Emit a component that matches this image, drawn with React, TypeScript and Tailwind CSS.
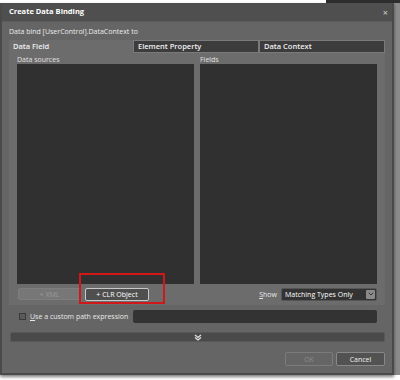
import { ChevronDown } from "lucide-react";

const font = { fontFamily: '"Open Sans", "Noto Sans", sans-serif' };

function Tab({ label, active }: { label: string; active?: boolean }) {
  return (
    <div
      className={
        active
          ? "flex-1 h-[13px] flex items-center px-[4px] bg-[#6c6c6c] text-[#f0f0f0]"
          : "flex-1 h-[13px] flex items-center px-[4px] bg-[#3c3c3c] border border-[#7a7a7a] text-[#f0f0f0]"
      }
    >
      <span className="text-[7.5px] font-semibold leading-none whitespace-nowrap">{label}</span>
    </div>
  );
}

export default function App() {
  return (
    <div className="w-[400px] h-[380px] bg-white overflow-hidden flex flex-col" style={font}>
      {/* window behind the dialog */}
      <div className="h-[3px] flex shrink-0">
        <div className="w-[326px] bg-white" />
        <div className="flex-1 bg-[#2e2e2e]" />
      </div>

      <div className="flex h-[372px] shrink-0">
        <div className="w-[394px] flex flex-col bg-[#656565] border-x-[2px] border-b-[2px] border-[#4a4a4a] shadow-[0_2px_3px_rgba(0,0,0,0.5)] relative">
          {/* title bar */}
          <div className="h-[19px] shrink-0 bg-[#4f4f4f] border-b border-[#5c5c5c] flex items-center justify-between pl-[7px] pr-[4px]">
            <span className="text-[7.5px] font-bold text-white leading-none">Create Data Binding</span>
            <span className="text-[9px] text-[#d0d0d0] leading-none">×</span>
          </div>

          <div className="flex-1 flex flex-col px-[7px]">
            <div className="h-[18px] flex items-center">
              <span className="text-[7px] text-[#ececec] leading-none whitespace-nowrap">Data bind [UserControl].DataContext to</span>
            </div>

            {/* tabs */}
            <div className="flex h-[13px]">
              <Tab label="Data Field" active />
              <Tab label="Element Property" />
              <Tab label="Data Context" />
            </div>

            {/* tab content */}
            <div className="h-[252px] bg-[#6c6c6c] flex flex-col px-[8px]">
              <div className="flex gap-[6px] h-[231px]">
                <div className="flex-1 flex flex-col">
                  <div className="h-[11px] flex items-end pb-[1px]">
                    <span className="text-[7px] text-[#e0e0e0] leading-none">Data sources</span>
                  </div>
                  <div className="flex-1 bg-[#303030]" />
                </div>
                <div className="flex-1 flex flex-col">
                  <div className="h-[11px] flex items-end pb-[1px]">
                    <span className="text-[7px] text-[#e0e0e0] leading-none">Fields</span>
                  </div>
                  <div className="flex-1 bg-[#303030]" />
                </div>
              </div>

              <div className="flex items-center mt-[3px] h-[14px]">
                <div className="ml-[1px] w-[63px] h-[12px] rounded-[2px] bg-[#777777] border border-[#7e7e7e] flex items-center justify-center">
                  <span className="text-[7px] text-[#9a9a9a] leading-none">+ XML</span>
                </div>
                <div className="ml-[4px] w-[64px] h-[13px] rounded-[2px] bg-[#4f4f4f] border border-[#c8c8c8] flex items-center justify-center">
                  <span className="text-[7px] text-white leading-none whitespace-nowrap">+ CLR Object</span>
                </div>
                <div className="flex-1" />
                <span className="text-[7px] text-[#e8e8e8] leading-none mr-[4px]">
                  <span className="underline">S</span>how
                </span>
                <div className="w-[96px] h-[13px] bg-[#333333] border border-[#555] rounded-[2px] flex items-center pl-[3px] pr-[1px]">
                  <span className="flex-1 text-[7px] text-white leading-none whitespace-nowrap">Matching Types Only</span>
                  <div className="w-[9px] h-[9px] bg-[#8a8a8a] rounded-[1px] flex items-center justify-center">
                    <ChevronDown size={8} color="#333" strokeWidth={3} />
                  </div>
                </div>
              </div>
            </div>

            {/* custom path row */}
            <div className="flex items-center h-[18px] mt-[2px] pl-[10px] pr-[8px]">
              <div className="w-[7px] h-[7px] border border-[#3a3a3a] bg-[#5a5a5a]" />
              <span className="ml-[4px] text-[7px] text-[#e8e8e8] leading-none whitespace-nowrap">
                <span className="underline">U</span>se a custom path expression
              </span>
              <div className="ml-[5px] flex-1 h-[13px] bg-[#333333] rounded-[2px]" />
            </div>

            {/* expander */}
            <div className="mt-[7px] ml-[1px] h-[10px] bg-[#4a4a4a] border border-[#585858] rounded-[2px] flex items-center justify-center">
              <svg width="8" height="7" viewBox="0 0 8 7" fill="none" stroke="#e0e0e0" strokeWidth="1.3">
                <path d="M1 1 L4 3.5 L7 1" />
                <path d="M1 3.5 L4 6 L7 3.5" />
              </svg>
            </div>

            {/* dialog buttons */}
            <div className="flex justify-end gap-[3px] mt-[10px]">
              <div className="w-[48px] h-[14px] rounded-[2px] border border-[#7c7c7c] bg-[#656565] flex items-center justify-center">
                <span className="text-[7px] text-[#8c8c8c] leading-none">OK</span>
              </div>
              <div className="w-[49px] h-[14px] rounded-[2px] border border-[#888] bg-[#525252] flex items-center justify-center">
                <span className="text-[7px] text-[#f0f0f0] leading-none">Cancel</span>
              </div>
            </div>
          </div>

          {/* red annotation rectangle */}
          <div className="absolute left-[77px] top-[270px] w-[86px] h-[31px] border-[2px] border-[#d01818]" />
        </div>
        <div className="flex-1 bg-[#8a8a8a]" />
      </div>
      <div className="flex-1 bg-white" />
    </div>
  );
}
